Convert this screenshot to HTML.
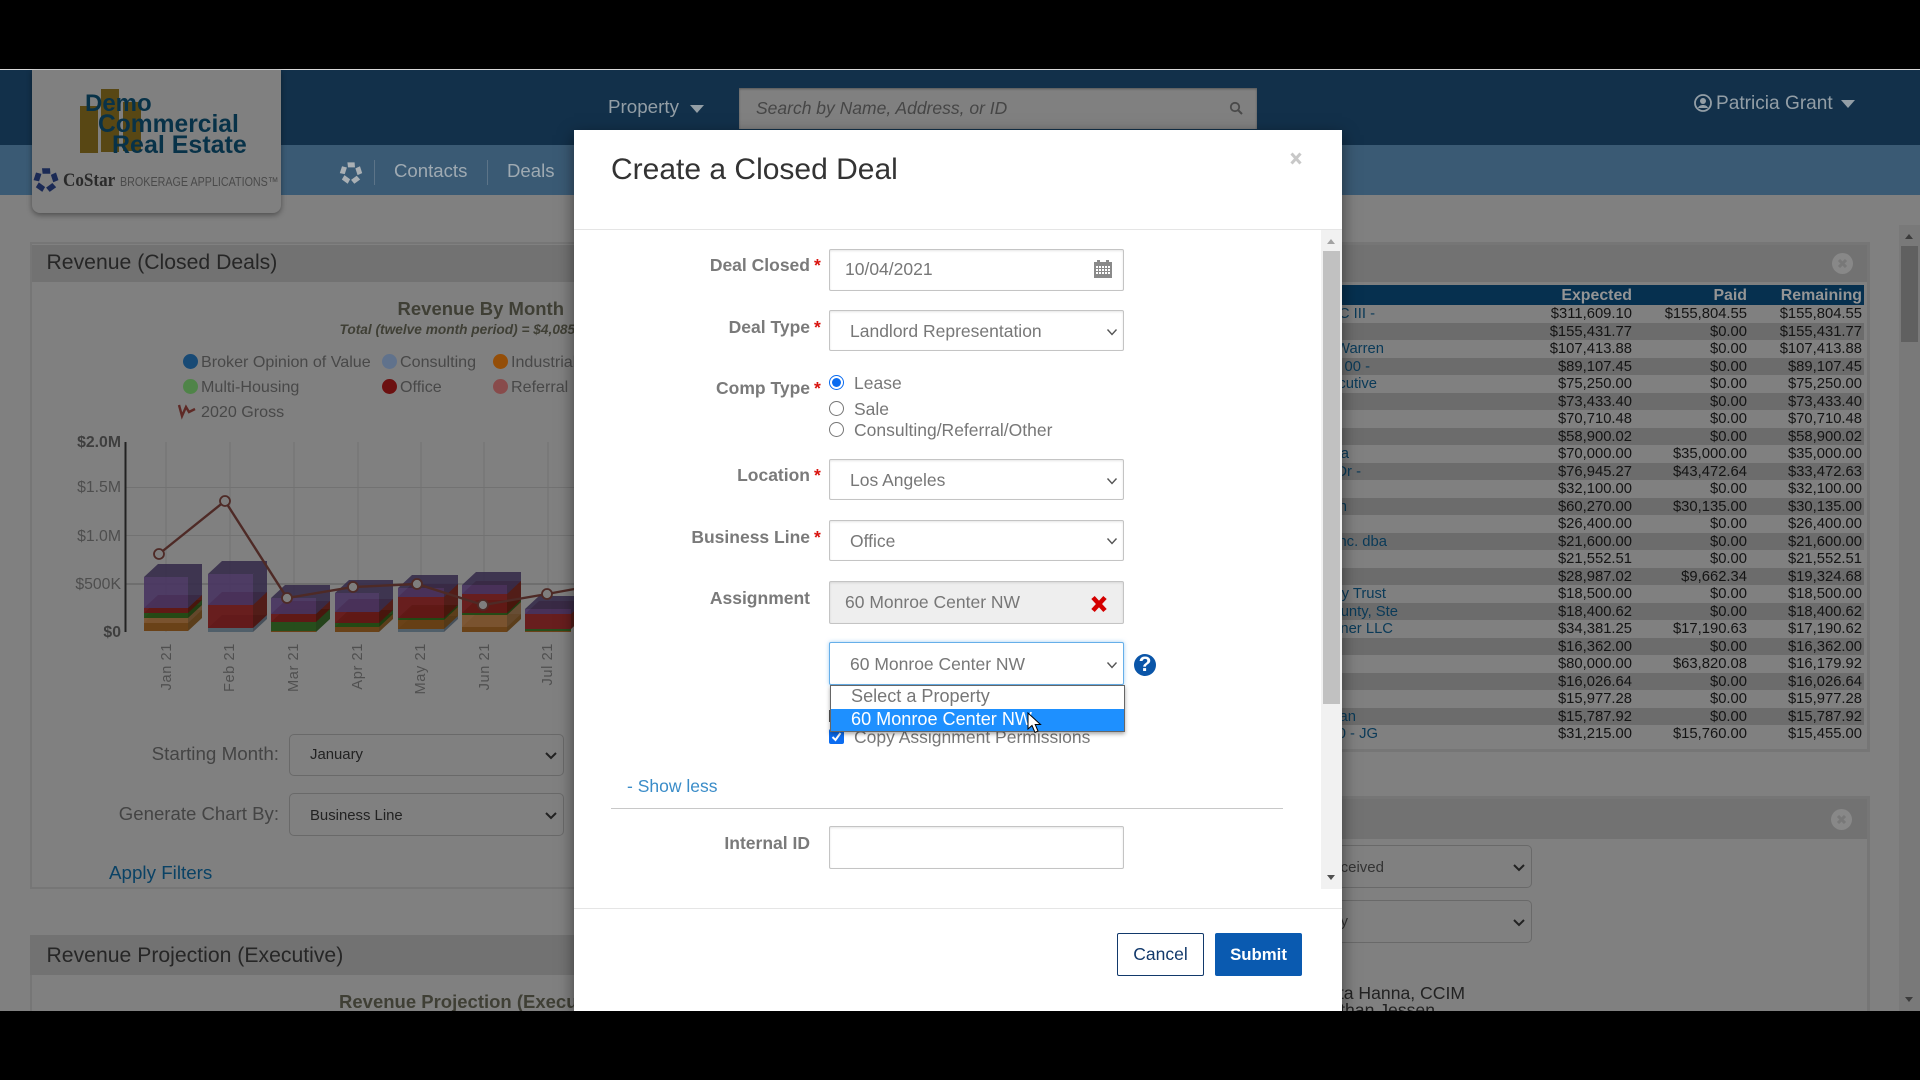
<!DOCTYPE html>
<html lang="en"><head><meta charset="utf-8"><title>Create a Closed Deal</title>
<style>
html,body{margin:0;padding:0;width:1920px;height:1080px;overflow:hidden;background:#000;font-family:"Liberation Sans",sans-serif}
div,span,a{box-sizing:border-box}
.b{position:absolute}
.t{position:absolute;white-space:nowrap;line-height:20px;height:20px}
.rt{text-align:right}
.r{position:absolute;left:1300px;width:564px;height:17.5px;line-height:17.5px;font-size:14.8px;color:#141414}
.r.d{background:#6c6c6c}
.r span{position:absolute;white-space:nowrap;top:1px}
.r .x{right:232px}.r .y{right:117px}.r .z{right:2px}
.r a{position:absolute;white-space:nowrap;color:#0a3a58;top:1px}
.lg{font-size:16.1px;color:#484848}
.dot{position:absolute;width:15px;height:15px;border-radius:50%}
.sel{position:absolute;border:1px solid #696969;border-radius:5px}
.chev{position:absolute}
.lab{font-size:17.5px;font-weight:bold;color:#7a7a7a;text-align:right;right:1110px}
.ast{font-size:17.5px;font-weight:bold;color:#d9140f;left:814px}
.inp{position:absolute;left:829px;width:295px;border:1px solid #c4c4c4;border-radius:2px;background:#fff;box-shadow:inset 0 1px 2px rgba(0,0,0,.1)}
.val{font-size:17.5px;color:#777}
.rad{position:absolute;left:829px;width:15px;height:15px;border-radius:50%;border:1.4px solid #767676;background:#fff}
</style></head>
<body>
<!-- top frame -->
<div class="b" style="left:0;top:69px;width:1920px;height:1px;background:#d8d8d8"></div>
<div class="b" style="left:0;top:70px;width:1920px;height:75px;background:#12304a"></div>
<div class="b" style="left:0;top:145px;width:1920px;height:50px;background:#3a5a74"></div>
<div class="b" style="left:0;top:195px;width:1920px;height:816px;background:#808080"></div>

<!-- header -->
<div class="t" style="left:608px;top:97px;font-size:18.8px;color:#939ea6">Property</div>
<div class="b" style="left:690px;top:105px;width:0;height:0;border-left:7px solid transparent;border-right:7px solid transparent;border-top:8px solid #939ea6"></div>
<div class="b" style="left:739px;top:88px;width:518px;height:41px;background:#808080;box-shadow:inset 0 1px 2px rgba(0,0,0,.35)"></div>
<div class="t" style="left:756px;top:98px;font-size:17.5px;font-style:italic;color:#464646">Search by Name, Address, or ID</div>
<svg class="b" style="left:1229px;top:101px" width="14" height="14" viewBox="0 0 14 14"><circle cx="6" cy="6" r="4.2" fill="none" stroke="#4a4a4a" stroke-width="1.8"/><path d="M9 9l4 4" stroke="#4a4a4a" stroke-width="2"/></svg>
<svg class="b" style="left:1694px;top:93px" width="18" height="20" viewBox="0 0 18 20"><circle cx="9" cy="10" r="8" fill="none" stroke="#939ea6" stroke-width="1.8"/><circle cx="9" cy="8" r="3" fill="#939ea6"/><path d="M4 15c1-4 9-4 10 0" fill="#939ea6"/></svg>
<div class="t" style="left:1716px;top:94px;font-size:19.1px;color:#939ea6">Patricia Grant</div>
<div class="b" style="left:1841px;top:100px;width:0;height:0;border-left:7px solid transparent;border-right:7px solid transparent;border-top:8px solid #939ea6"></div>

<!-- nav -->
<svg class="b" style="left:339px;top:161px" width="24" height="24" viewBox="-12 -12 24 24">
<g fill="#aab0b4"><path id="pt" d="M-3.6-10.6 3.6-10.6 4-5.6-3-5.6Z"/><use href="#pt" transform="rotate(72)"/><use href="#pt" transform="rotate(144)"/><use href="#pt" transform="rotate(216)"/><use href="#pt" transform="rotate(288)"/></g></svg>
<div class="b" style="left:374px;top:160px;width:1px;height:25px;background:#5c7488"></div>
<div class="t" style="left:394px;top:161px;font-size:18.6px;color:#9faab2">Contacts</div>
<div class="b" style="left:487px;top:160px;width:1px;height:25px;background:#5c7488"></div>
<div class="t" style="left:507px;top:161px;font-size:18.6px;color:#9faab2">Deals</div>

<!-- logo card -->
<div class="b" style="left:32px;top:70px;width:249px;height:143px;background:#808080;border-radius:0 0 8px 8px;box-shadow:0 2px 6px rgba(0,0,0,.4)"></div>
<div class="b" style="left:80px;top:106px;width:18px;height:47px;background:#584714"></div>
<div class="b" style="left:101px;top:89px;width:18px;height:63px;background:#584714"></div>
<div class="b" style="left:123px;top:102px;width:18px;height:49px;background:#584714"></div>
<div class="t" style="left:85px;top:94px;font-size:24px;font-weight:bold;color:#083248">Demo</div>
<div class="t" style="left:98px;top:115px;font-size:24.6px;font-weight:bold;color:#083248">Commercial</div>
<div class="t" style="left:112px;top:135px;font-size:25px;font-weight:bold;color:#083248">Real Estate</div>
<svg class="b" style="left:33px;top:167px" width="26" height="26" viewBox="-13 -13 26 26">
<g fill="#1b2a55"><path id="pt2" d="M-4-11.8 4-11.8 4.4-6.2-3.4-6.2Z"/><use href="#pt2" transform="rotate(72)"/><use href="#pt2" transform="rotate(144)"/><use href="#pt2" transform="rotate(216)"/><use href="#pt2" transform="rotate(288)"/></g></svg>
<div class="t" style="left:63px;top:171px;font-family:'Liberation Serif',serif;font-size:19px;color:#2a2a2a;font-weight:bold;transform:scaleX(.9);transform-origin:left">CoStar</div>
<div class="t" style="left:120px;top:172px;font-size:12.6px;color:#4a4a4a;transform:scaleX(.853);transform-origin:left">BROKERAGE APPLICATIONS™</div>

<!-- left panel -->
<div class="b" style="left:30px;top:242px;width:560px;height:647px;border:2px solid #767676;border-right:0"></div>
<div class="b" style="left:32px;top:245px;width:550px;height:37px;background:#727272"></div>
<div class="t" style="left:46.500px;top:253px;font-size:21.2px;color:#262626">Revenue (Closed Deals)</div>
<div class="t" style="left:397.500px;top:299px;font-size:18.5px;font-weight:bold;color:#3f3f35">Revenue By Month</div>
<div class="t" style="left:339.500px;top:320px;font-size:13.7px;font-weight:bold;font-style:italic;color:#3f3f35">Total (twelve month period) = $4,085,221.00</div>

<div class="dot" style="left:183px;top:354px;background:#184a75"></div><div class="t lg" style="left:201px;top:352px">Broker Opinion of Value</div>
<div class="dot" style="left:382px;top:354px;background:#60728c"></div><div class="t lg" style="left:400px;top:352px">Consulting</div>
<div class="dot" style="left:493px;top:354px;background:#944e08"></div><div class="t lg" style="left:511px;top:352px">Industrial</div>
<div class="dot" style="left:183px;top:379px;background:#4f8448"></div><div class="t lg" style="left:201px;top:377px">Multi-Housing</div>
<div class="dot" style="left:382px;top:379px;background:#6c1010"></div><div class="t lg" style="left:400px;top:377px">Office</div>
<div class="dot" style="left:493px;top:379px;background:#884b4b"></div><div class="t lg" style="left:511px;top:377px">Referral</div>
<div class="t lg" style="left:201px;top:402px">2020 Gross</div>

<svg class="b" style="left:0;top:0" width="600" height="720" viewBox="0 0 600 720" font-family="Liberation Sans, sans-serif">
<path d="M179 405l3 11 4-9 3 5 6-3" fill="none" stroke="#5e2a26" stroke-width="2.4"/>
<g stroke="#727272" stroke-width="1" fill="none">
<path d="M166 442V632M230 442V632M294 442V632M358 442V632M421 442V632M484 442V632M548 442V632"/>
<path d="M125 487.500H580M125 535.500H580"/></g>
<path d="M125 584H580" stroke="#6e6e6e" stroke-width="2"/>
<path d="M125.500 442V632" stroke="#222" stroke-width="2"/>
<g font-size="15.800" text-anchor="end" fill="#4e4e4e">
<text x="121" y="447" font-weight="bold" fill="#3e3e3e">$2.0M</text>
<text x="121" y="492">$1.5M</text><text x="121" y="541">$1.0M</text><text x="121" y="589">$500K</text>
<text x="121" y="637" font-weight="bold" fill="#3e3e3e">$0</text></g>
<style>
.pf{fill:#483460;fill-opacity:.9}.pt{fill:#362c4a;fill-opacity:.9}
.rf{fill:#661616;fill-opacity:.92}.rt2{fill:#4c120c;fill-opacity:.9}
.gf{fill:#1f4a14;fill-opacity:.92}.gt{fill:#1a3c10;fill-opacity:.9}
.of{fill:#683e12;fill-opacity:.95}.ot{fill:#563610;fill-opacity:.9}
.lf{fill:#7c5430;fill-opacity:.95}.lt{fill:#64482c;fill-opacity:.9}
.sf{fill:#505f6a}.st{fill:#46505a}
</style>
<!-- Jan -->
<path class="ot" d="M144 623l14-13h44l-14 13zM188 623l14-13V618l-14 13z"/><path class="of" d="M144 623H188V631H144z"/>
<path class="lt" d="M144 618l14-13h44l-14 13zM188 618l14-13V610l-14 13z"/><path class="lf" d="M144 618H188V623H144z"/>
<path class="gt" d="M144 613l14-13h44l-14 13zM188 613l14-13V605l-14 13z"/><path class="gf" d="M144 613H188V618H144z"/>
<path class="rt2" d="M144 608l14-13h44l-14 13zM188 608l14-13V600l-14 13z"/><path class="rf" d="M144 608H188V613H144z"/>
<path class="pt" d="M144 577l14-13h44l-14 13zM188 577l14-13V595l-14 13z"/><path class="pf" d="M144 577H188V608H144z"/>
<!-- Feb -->
<path class="st" d="M208 628l14-13h45l-14 13zM253 628l14-13V619l-14 13z"/><path class="sf" d="M208 628H253V632H208z"/>
<path class="rt2" d="M208 605l14-13h45l-14 13zM253 605l14-13V615l-14 13z"/><path class="rf" d="M208 605H253V628H208z"/>
<path class="pt" d="M208 574l14-13h45l-14 13zM253 574l14-13V592l-14 13z"/><path class="pf" d="M208 574H253V605H208z"/>
<!-- Mar -->
<path class="gt" d="M271 622l14-13h45l-14 13zM316 622l14-13V619l-14 13z"/><path class="gf" d="M271 622H316V631H271z"/>
<path class="rt2" d="M271 614l14-13h45l-14 13zM316 614l14-13V609l-14 13z"/><path class="rf" d="M271 614H316V622H271z"/>
<path class="pt" d="M271 598l14-13h45l-14 13zM316 598l14-13V601l-14 13z"/><path class="pf" d="M271 598H316V614H271z"/>
<path class="of" d="M271 631H316V632H271z"/>
<!-- Apr -->
<path class="ot" d="M335 627l14-13h44l-14 13zM379 627l14-13V619l-14 13z"/><path class="of" d="M335 627H379V632H335z"/>
<path class="gt" d="M335 623l14-13h44l-14 13zM379 623l14-13V614l-14 13z"/><path class="gf" d="M335 623H379V627H335z"/>
<path class="rt2" d="M335 612l14-13h44l-14 13zM379 612l14-13V610l-14 13z"/><path class="rf" d="M335 612H379V623H335z"/>
<path class="pt" d="M335 593l14-13h44l-14 13zM379 593l14-13V599l-14 13z"/><path class="pf" d="M335 593H379V612H335z"/>
<!-- May -->
<path class="st" d="M398 629l14-13h46l-14 13zM444 629l14-13V619l-14 13z"/><path class="sf" d="M398 629H444V632H398z"/>
<path class="ot" d="M398 620l14-13h46l-14 13zM444 620l14-13V616l-14 13z"/><path class="of" d="M398 620H444V629H398z"/>
<path class="gt" d="M398 618l14-13h46l-14 13zM444 618l14-13V607l-14 13z"/><path class="gf" d="M398 618H444V620H398z"/>
<path class="rt2" d="M398 597l14-13h46l-14 13zM444 597l14-13V605l-14 13z"/><path class="rf" d="M398 597H444V618H398z"/>
<path class="pt" d="M398 588l14-13h46l-14 13zM444 588l14-13V584l-14 13z"/><path class="pf" d="M398 588H444V597H398z"/>
<!-- Jun -->
<path class="ot" d="M462 627l14-13h45l-14 13zM507 627l14-13V619l-14 13z"/><path class="of" d="M462 627H507V632H462z"/>
<path class="lt" d="M462 615l14-13h45l-14 13zM507 615l14-13V614l-14 13z"/><path class="lf" d="M462 615H507V627H462z"/>
<path class="gt" d="M462 613l14-13h45l-14 13zM507 613l14-13V602l-14 13z"/><path class="gf" d="M462 613H507V615H462z"/>
<path class="rt2" d="M462 594l14-13h45l-14 13zM507 594l14-13V600l-14 13z"/><path class="rf" d="M462 594H507V613H462z"/>
<path class="pt" d="M462 585l14-13h45l-14 13zM507 585l14-13V581l-14 13z"/><path class="pf" d="M462 585H507V594H462z"/>
<!-- Jul -->
<path class="rt2" d="M525 614l14-13h46l-14 13zM571 614l14-13V616l-14 13z"/><path class="rf" d="M525 614H571V629H525z"/>
<path class="gf" d="M525 629H571V631H525z"/><path class="of" d="M525 631H571V632H525z"/>
<path class="pt" d="M525 609l14-13h46l-14 13zM571 609l14-13V601l-14 13z"/><path class="pf" d="M525 609H571V614H525z"/>
<!-- line -->
<path d="M159 554L225 501 287 598 353 587 417 584 483 605 547 594 580 588" fill="none" stroke="#4e2a26" stroke-width="2.400"/>
<g fill="#7e7e7e" stroke="#4e2a26" stroke-width="1.800">
<circle cx="159" cy="554" r="5"/><circle cx="225" cy="501" r="5"/><circle cx="287" cy="598" r="5"/><circle cx="353" cy="587" r="5"/><circle cx="417" cy="584" r="5"/><circle cx="483" cy="605" r="5"/><circle cx="547" cy="594" r="5"/></g>
<g font-size="14.600" letter-spacing=".6" fill="#505050" text-anchor="end">
<text transform="translate(171 643) rotate(-90)">Jan 21</text>
<text transform="translate(234 643) rotate(-90)">Feb 21</text>
<text transform="translate(298 643) rotate(-90)">Mar 21</text>
<text transform="translate(362 643) rotate(-90)">Apr 21</text>
<text transform="translate(425 643) rotate(-90)">May 21</text>
<text transform="translate(489 643) rotate(-90)">Jun 21</text>
<text transform="translate(552 643) rotate(-90)">Jul 21</text></g>
</svg>

<div class="t rt" style="right:1641px;top:744px;font-size:18.8px;color:#444">Starting Month:</div>
<div class="sel" style="left:289px;top:734px;width:275px;height:42px"></div>
<div class="t" style="left:310px;top:745px;font-size:14.900px;color:#222">January</div>
<svg class="chev" style="left:545px;top:751px" width="12" height="9"><path d="M1 2l5 5 5-5" fill="none" stroke="#222" stroke-width="2"/></svg>
<div class="t rt" style="right:1641px;top:804px;font-size:18.6px;color:#444">Generate Chart By:</div>
<div class="sel" style="left:289px;top:793px;width:275px;height:43px"></div>
<div class="t" style="left:310px;top:806px;font-size:14.900px;color:#222">Business Line</div>
<svg class="chev" style="left:545px;top:811px" width="12" height="9"><path d="M1 2l5 5 5-5" fill="none" stroke="#222" stroke-width="2"/></svg>
<div class="t" style="left:109px;top:863px;font-size:18.800px;color:#0a4265">Apply Filters</div>
<div class="b" style="left:30px;top:935px;width:550px;height:40px;background:#727272"></div>
<div class="b" style="left:30px;top:975px;width:2px;height:40px;background:#767676"></div>
<div class="t" style="left:46.500px;top:945.500px;font-size:21.2px;color:#262626">Revenue Projection (Executive)</div>
<div class="t" style="left:339px;top:992px;font-size:18.5px;font-weight:bold;color:#3f3f35">Revenue Projection (Executive)</div>

<!-- right panel -->
<div class="b" style="left:1300px;top:242px;width:570px;height:510px;border:3px solid #767676;border-left:0"></div>
<div class="b" style="left:1300px;top:245px;width:567px;height:37px;background:#727272"></div>
<div class="b" style="left:1832px;top:253px;width:21px;height:21px;border-radius:50%;background:#888"></div>
<svg class="b" style="left:1836px;top:257px" width="13" height="13"><path d="M3 3l7 7M10 3l-7 7" stroke="#787878" stroke-width="3"/></svg>
<div class="b" style="left:1300px;top:285px;width:564px;height:20px;background:#06304f"></div>
<div class="t rt" style="right:288px;top:286px;line-height:20px;font-size:15.9px;font-weight:bold;color:#959595">Expected</div>
<div class="t rt" style="right:173px;top:286px;line-height:20px;font-size:15.9px;font-weight:bold;color:#959595">Paid</div>
<div class="t rt" style="right:58px;top:286px;line-height:20px;font-size:15.9px;font-weight:bold;color:#959595">Remaining</div>

<div class="r" style="top:305px"><a style="right:489px">C III -</a><span class="x">$311,609.10</span><span class="y">$155,804.55</span><span class="z">$155,804.55</span></div>
<div class="r d" style="top:322.500px"><span class="x">$155,431.77</span><span class="y">$0.00</span><span class="z">$155,431.77</span></div>
<div class="r" style="top:340px"><a style="right:480px">Warren</a><span class="x">$107,413.88</span><span class="y">$0.00</span><span class="z">$107,413.88</span></div>
<div class="r d" style="top:357.500px"><a style="right:494px">00 -</a><span class="x">$89,107.45</span><span class="y">$0.00</span><span class="z">$89,107.45</span></div>
<div class="r" style="top:375px"><a style="right:487px">cutive</a><span class="x">$75,250.00</span><span class="y">$0.00</span><span class="z">$75,250.00</span></div>
<div class="r d" style="top:392.500px"><span class="x">$73,433.40</span><span class="y">$0.00</span><span class="z">$73,433.40</span></div>
<div class="r" style="top:410px"><span class="x">$70,710.48</span><span class="y">$0.00</span><span class="z">$70,710.48</span></div>
<div class="r d" style="top:427.500px"><span class="x">$58,900.02</span><span class="y">$0.00</span><span class="z">$58,900.02</span></div>
<div class="r" style="top:445px"><a style="right:515px">a</a><span class="x">$70,000.00</span><span class="y">$35,000.00</span><span class="z">$35,000.00</span></div>
<div class="r d" style="top:462.500px"><a style="right:503px">Dr -</a><span class="x">$76,945.27</span><span class="y">$43,472.64</span><span class="z">$33,472.63</span></div>
<div class="r" style="top:480px"><span class="x">$32,100.00</span><span class="y">$0.00</span><span class="z">$32,100.00</span></div>
<div class="r d" style="top:497.500px"><a style="right:517px">h</a><span class="x">$60,270.00</span><span class="y">$30,135.00</span><span class="z">$30,135.00</span></div>
<div class="r" style="top:515px"><span class="x">$26,400.00</span><span class="y">$0.00</span><span class="z">$26,400.00</span></div>
<div class="r d" style="top:532.500px"><a style="right:477px">Inc. dba</a><span class="x">$21,600.00</span><span class="y">$0.00</span><span class="z">$21,600.00</span></div>
<div class="r" style="top:550px"><span class="x">$21,552.51</span><span class="y">$0.00</span><span class="z">$21,552.51</span></div>
<div class="r d" style="top:567.500px"><span class="x">$28,987.02</span><span class="y">$9,662.34</span><span class="z">$19,324.68</span></div>
<div class="r" style="top:585px"><a style="right:478px">ty Trust</a><span class="x">$18,500.00</span><span class="y">$0.00</span><span class="z">$18,500.00</span></div>
<div class="r d" style="top:602.500px"><a style="right:466px">County, Ste</a><span class="x">$18,400.62</span><span class="y">$0.00</span><span class="z">$18,400.62</span></div>
<div class="r" style="top:620px"><a style="right:471px">rtner LLC</a><span class="x">$34,381.25</span><span class="y">$17,190.63</span><span class="z">$17,190.62</span></div>
<div class="r d" style="top:637.500px"><span class="x">$16,362.00</span><span class="y">$0.00</span><span class="z">$16,362.00</span></div>
<div class="r" style="top:655px"><span class="x">$80,000.00</span><span class="y">$63,820.08</span><span class="z">$16,179.92</span></div>
<div class="r d" style="top:672.500px"><span class="x">$16,026.64</span><span class="y">$0.00</span><span class="z">$16,026.64</span></div>
<div class="r" style="top:690px"><span class="x">$15,977.28</span><span class="y">$0.00</span><span class="z">$15,977.28</span></div>
<div class="r d" style="top:707.500px"><a style="right:508px">Han</a><span class="x">$15,787.92</span><span class="y">$0.00</span><span class="z">$15,787.92</span></div>
<div class="r" style="top:725px"><a style="right:486px">100 - JG</a><span class="x">$31,215.00</span><span class="y">$15,760.00</span><span class="z">$15,455.00</span></div>

<!-- right panel 2 -->
<div class="b" style="left:1300px;top:796px;width:570px;height:230px;border:3px solid #767676;border-left:0;border-bottom:0"></div>
<div class="b" style="left:1300px;top:799px;width:567px;height:40px;background:#727272"></div>
<div class="b" style="left:1831px;top:809px;width:21px;height:21px;border-radius:50%;background:#888"></div>
<svg class="b" style="left:1835px;top:813px" width="13" height="13"><path d="M3 3l7 7M10 3l-7 7" stroke="#787878" stroke-width="3"/></svg>
<div class="sel" style="left:1240px;top:845px;width:292px;height:43px"></div>
<div class="t rt" style="right:536px;top:858px;font-size:15px;color:#333">Received</div>
<svg class="chev" style="left:1513px;top:863px" width="12" height="9"><path d="M1 2l5 5 5-5" fill="none" stroke="#222" stroke-width="2"/></svg>
<div class="sel" style="left:1240px;top:900px;width:292px;height:43px"></div>
<div class="t rt" style="right:572px;top:912px;font-size:15px;color:#333">by</div>
<svg class="chev" style="left:1513px;top:918px" width="12" height="9"><path d="M1 2l5 5 5-5" fill="none" stroke="#222" stroke-width="2"/></svg>
<div class="t rt" style="right:455px;top:983px;font-size:17.6px;color:#222">Christa Hanna, CCIM</div>
<div class="t rt" style="right:485px;top:1000px;font-size:17.6px;color:#222">Jonathan Jessen</div>

<!-- page scrollbar -->
<div class="b" style="left:1899px;top:225px;width:21px;height:786px;background:#797979"></div>
<div class="b" style="left:1901px;top:246px;width:17px;height:96px;background:#606060"></div>
<div class="b" style="left:1905px;top:234px;width:0;height:0;border-left:4.500px solid transparent;border-right:4.500px solid transparent;border-bottom:5px solid #3c3c3c"></div>
<div class="b" style="left:1905px;top:997px;width:0;height:0;border-left:4.500px solid transparent;border-right:4.500px solid transparent;border-top:5px solid #3c3c3c"></div>

<!-- modal -->
<div class="b" style="left:574px;top:130px;width:768px;height:881px;background:#fff;box-shadow:0 5px 15px rgba(0,0,0,.5)"></div>
<div class="t" style="left:611px;top:155px;height:30px;line-height:30px;font-size:30px;color:#333">Create a Closed Deal</div>
<svg class="b" style="left:1290px;top:152px" width="12" height="13"><path d="M1.500 1.500l9 10M10.500 1.500l-9 10" stroke="#c8c8c8" stroke-width="3"/></svg>
<div class="b" style="left:574px;top:229px;width:768px;height:1px;background:#e5e5e5"></div>

<!-- modal scrollbar -->
<div class="b" style="left:1321px;top:230px;width:21px;height:659px;background:#f1f1f1"></div>
<div class="b" style="left:1323px;top:251px;width:17px;height:453px;background:#c1c1c1"></div>
<div class="b" style="left:1327px;top:239px;width:0;height:0;border-left:4.500px solid transparent;border-right:4.500px solid transparent;border-bottom:5px solid #a3a3a3"></div>
<div class="b" style="left:1327px;top:875px;width:0;height:0;border-left:4.500px solid transparent;border-right:4.500px solid transparent;border-top:5px solid #505050"></div>

<!-- form -->
<div class="t lab" style="top:255px">Deal Closed</div><div class="t ast" style="top:255px">*</div>
<div class="inp" style="top:249px;height:42px"></div>
<div class="t val" style="left:845px;top:259px">10/04/2021</div>
<svg class="b" style="left:1094px;top:259px" width="18" height="19" viewBox="0 0 18 19"><path d="M0 3h3V1h3v2h6V1h3v2h3v16H0z" fill="#8a8a8a"/><g fill="#fff"><path d="M2 7h2v2H2zM5 7h2v2H5zM8 7h2v2H8zM11 7h2v2h-2zM14 7h2v2h-2zM2 10h2v2H2zM5 10h2v2H5zM8 10h2v2H8zM11 10h2v2h-2zM14 10h2v2h-2zM2 13h2v2H2zM5 13h2v2H5zM8 13h2v2H8zM11 13h2v2h-2zM14 13h2v2h-2z"/></g></svg>

<div class="t lab" style="top:317px">Deal Type</div><div class="t ast" style="top:317px">*</div>
<div class="inp" style="top:310px;height:41px"></div>
<div class="t val" style="left:850px;top:321px">Landlord Representation</div>
<svg class="chev" style="left:1106px;top:328px" width="12" height="8"><path d="M1.500 1.500l4.500 5 4.500-5" fill="none" stroke="#555" stroke-width="1.400"/></svg>

<div class="t lab" style="top:378px">Comp Type</div><div class="t ast" style="top:378px">*</div>
<div class="rad" style="top:375px;border-color:#0b6cf0;border-width:1.400px"></div>
<div class="b" style="left:832px;top:378px;width:9px;height:9px;border-radius:50%;background:#0b6cf0"></div>
<div class="t val" style="left:854px;top:373px">Lease</div>
<div class="rad" style="top:401px"></div>
<div class="t val" style="left:854px;top:399px">Sale</div>
<div class="rad" style="top:422px"></div>
<div class="t val" style="left:854px;top:420px">Consulting/Referral/Other</div>

<div class="t lab" style="top:465px">Location</div><div class="t ast" style="top:465px">*</div>
<div class="inp" style="top:459px;height:41px"></div>
<div class="t val" style="left:850px;top:470px">Los Angeles</div>
<svg class="chev" style="left:1106px;top:477px" width="12" height="8"><path d="M1.500 1.500l4.500 5 4.500-5" fill="none" stroke="#555" stroke-width="1.400"/></svg>

<div class="t lab" style="top:527px">Business Line</div><div class="t ast" style="top:527px">*</div>
<div class="inp" style="top:520px;height:41px"></div>
<div class="t val" style="left:850px;top:530.500px">Office</div>
<svg class="chev" style="left:1106px;top:537px" width="12" height="8"><path d="M1.500 1.500l4.500 5 4.500-5" fill="none" stroke="#555" stroke-width="1.400"/></svg>

<div class="t lab" style="top:588px">Assignment</div>
<div class="inp" style="top:581px;height:43px;background:#eee"></div>
<div class="t val" style="left:845px;top:592px">60 Monroe Center NW</div>
<svg class="b" style="left:1090px;top:595px" width="18" height="18"><path d="M3 2.500l12 13M15 2.500l-12 13" stroke="#d40000" stroke-width="4.600"/></svg>

<div class="inp" style="top:642px;height:43px;border-color:#66afe9;box-shadow:0 0 4px rgba(102,175,233,.6)"></div>
<div class="t val" style="left:850px;top:653.500px">60 Monroe Center NW</div>
<svg class="chev" style="left:1106px;top:661px" width="12" height="8"><path d="M1.500 1.500l4.500 5 4.500-5" fill="none" stroke="#555" stroke-width="1.400"/></svg>
<div class="b" style="left:1134px;top:654px;width:22px;height:22px;border-radius:50%;background:#0a55a8"></div>
<div class="t" style="left:1134px;top:655px;width:22px;text-align:center;font-size:21px;font-weight:bold;color:#fff">?</div>

<div class="b" style="left:829px;top:710px;width:3px;height:12px;background:#555"></div>
<div class="b" style="left:829px;top:729px;width:15px;height:15px;border-radius:2px;background:#0b6cf0"></div>
<svg class="b" style="left:829px;top:729px" width="15" height="15"><path d="M3.500 8l3 3 5-7" fill="none" stroke="#fff" stroke-width="2"/></svg>
<div class="t val" style="left:854px;top:727px">Copy Assignment Permissions</div>

<div class="b" style="left:830px;top:685px;width:295px;height:47px;background:#fff;border:1px solid #666;box-shadow:0 2px 4px rgba(0,0,0,.35)"></div>
<div class="b" style="left:831px;top:709px;width:293px;height:22px;background:#1e90ff"></div>
<div class="t val" style="left:851px;top:686px;font-size:18.1px">Select a Property</div>
<div class="t val" style="left:851px;top:709px;color:#fff;font-size:18.1px">60 Monroe Center NW</div>
<svg class="b" style="left:1027px;top:712px;z-index:3" width="15" height="22" viewBox="0 0 15 22"><path d="M1 1V17L5 13.500 8 20.500 11 19 8.200 12.500H13.500Z" fill="#fff" stroke="#000" stroke-width="1"/></svg>

<div class="t" style="left:627px;top:776px;font-size:17.5px;color:#3a8cc8">- Show less</div>
<div class="b" style="left:611px;top:808px;width:672px;height:1px;background:#c8c8c8"></div>
<div class="t lab" style="top:833px">Internal ID</div>
<div class="inp" style="top:826px;height:43px"></div>

<div class="b" style="left:574px;top:908px;width:768px;height:1px;background:#e5e5e5"></div>
<div class="b" style="left:1117px;top:933px;width:87px;height:43px;border:1px solid #12396b;border-radius:2px;background:#fff;text-align:center;line-height:41px;font-size:17.5px;color:#12396b">Cancel</div>
<div class="b" style="left:1215px;top:933px;width:87px;height:43px;border-radius:2px;background:#0a5ab0;text-align:center;line-height:43px;font-size:16.8px;font-weight:bold;color:#fff">Submit</div>

<div class="b" style="left:0;top:1011px;width:1920px;height:69px;background:#000;z-index:5"></div>
</body></html>
